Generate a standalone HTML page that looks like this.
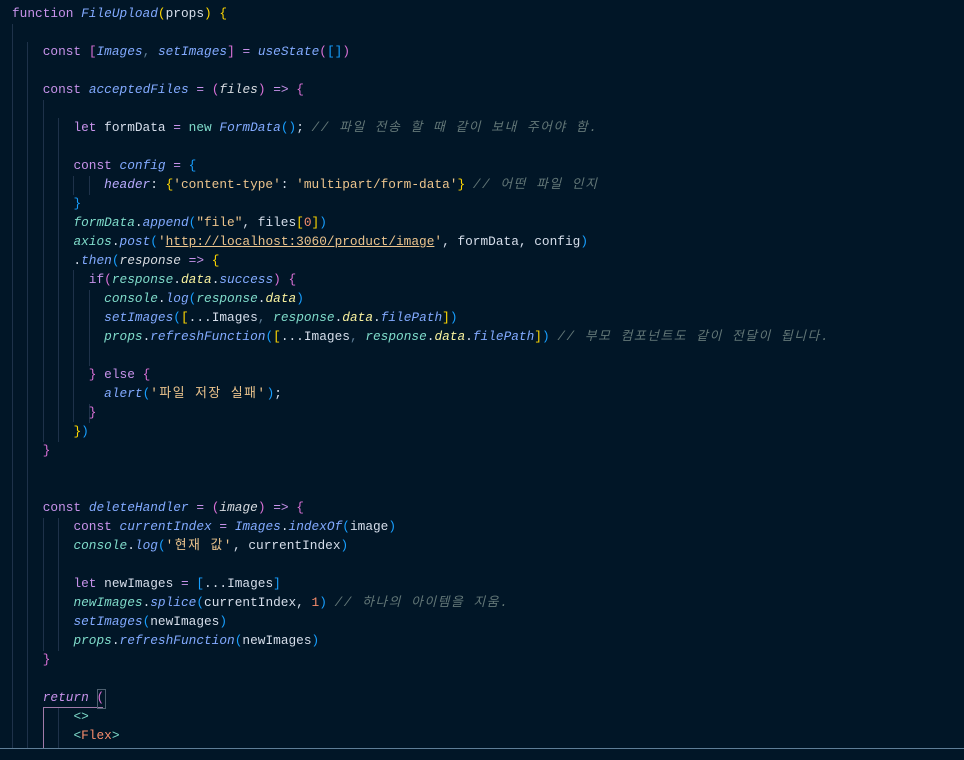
<!DOCTYPE html>
<html><head><meta charset="utf-8"><style>
body{margin:0;background:#011627;width:964px;height:760px;overflow:hidden;position:relative}
.l{position:absolute;left:12px;height:19px;line-height:19px;white-space:pre;font-family:"Liberation Mono","Noto Sans CJK KR",monospace;font-size:12.8px;color:#d6deeb}
.g{position:absolute;width:1px;background:#1e324a}
.k{color:#c792ea}.f{color:#82aaff;font-style:italic}.p{color:#d7dbe0;font-style:italic}
.s{color:#ecc48d}.c{color:#637777;font-style:italic}.y{color:#ffd700}.m{color:#da70d6}.b{color:#179fff}
.o{color:#c792ea}.pr{color:#faf39f;font-style:italic}.v{color:#7fdbca}.i{font-style:italic}.t{color:#7fdbca}.tn{color:#f78c6c}
.n{color:#f78c6c}.u{text-decoration:underline}.ob{color:#7fdbca;font-style:italic}.h{color:#baabff;font-style:italic}
.ko{letter-spacing:1.5px}.cm{color:#5f7e97}
</style></head><body>
<div class="g" style="left:12px;top:24px;height:724px"></div>
<div class="g" style="left:27px;top:42px;height:706px"></div>
<div class="g" style="left:43px;top:100px;height:342px"></div>
<div class="g" style="left:58px;top:118px;height:324px"></div>
<div class="g" style="left:73px;top:176px;height:19px"></div>
<div class="g" style="left:89px;top:176px;height:19px"></div>
<div class="g" style="left:73px;top:270px;height:152px"></div>
<div class="g" style="left:89px;top:290px;height:76px"></div>
<div class="g" style="left:89px;top:404px;height:19px"></div>
<div class="g" style="left:43px;top:518px;height:133px"></div>
<div class="g" style="left:58px;top:518px;height:133px"></div>
<div class="g" style="left:43px;top:707px;height:41px;background:#a07aa8"></div>
<div class="g" style="left:43px;top:707px;height:1px;width:60px;background:#a07aa8"></div>
<div class="g" style="left:58px;top:708px;height:40px"></div>
<div style="position:absolute;left:97px;top:689px;width:7px;height:18px;border:1px solid #4e6070"></div>

<div class="l" style="top:4px"><span class="k">function</span> <span class="f">FileUpload</span><span class="y">(</span>props<span class="y">)</span> <span class="y">{</span></div>
<div class="l" style="top:42px">    <span class="k">const</span> <span class="m">[</span><span class="f">Images</span><span class="cm">,</span> <span class="f">setImages</span><span class="m">]</span> <span class="o">=</span> <span class="f">useState</span><span class="m">(</span><span class="b">[]</span><span class="m">)</span></div>
<div class="l" style="top:80px">    <span class="k">const</span> <span class="f">acceptedFiles</span> <span class="o">=</span> <span class="m">(</span><span class="p">files</span><span class="m">)</span> <span class="o">=&gt;</span> <span class="m">{</span></div>
<div class="l" style="top:118px">        <span class="k">let</span> formData <span class="o">=</span> <span class="v">new</span> <span class="f">FormData</span><span class="b">()</span>; <span class="c ko">// 파일 전송 할 때 같이 보내 주어야 함.</span></div>
<div class="l" style="top:156px">        <span class="k">const</span> <span class="f">config</span> <span class="o">=</span> <span class="b">{</span></div>
<div class="l" style="top:175px">            <span class="h">header</span>: <span class="y">{</span><span class="s">'content-type'</span>: <span class="s">'multipart/form-data'</span><span class="y">}</span> <span class="c ko">// 어떤 파일 인지</span></div>
<div class="l" style="top:194px">        <span class="b">}</span></div>
<div class="l" style="top:213px">        <span class="ob">formData</span>.<span class="f">append</span><span class="b">(</span><span class="s">"file"</span>, files<span class="y">[</span><span class="n">0</span><span class="y">]</span><span class="b">)</span></div>
<div class="l" style="top:232px">        <span class="ob">axios</span>.<span class="f">post</span><span class="b">(</span><span class="s">'<span class="u">http://localhost:3060/product/image</span>'</span>, formData, config<span class="b">)</span></div>
<div class="l" style="top:251px">        .<span class="f">then</span><span class="b">(</span><span class="p">response</span> <span class="o">=&gt;</span> <span class="y">{</span></div>
<div class="l" style="top:270px">          <span class="k">if</span><span class="m">(</span><span class="ob">response</span>.<span class="pr">data</span>.<span class="f">success</span><span class="m">)</span> <span class="m">{</span></div>
<div class="l" style="top:289px">            <span class="ob">console</span>.<span class="f">log</span><span class="b">(</span><span class="ob">response</span>.<span class="pr">data</span><span class="b">)</span></div>
<div class="l" style="top:308px">            <span class="f">setImages</span><span class="b">(</span><span class="y">[</span>...Images<span class="cm">,</span> <span class="ob">response</span>.<span class="pr">data</span>.<span class="f">filePath</span><span class="y">]</span><span class="b">)</span></div>
<div class="l" style="top:327px">            <span class="ob">props</span>.<span class="f">refreshFunction</span><span class="b">(</span><span class="y">[</span>...Images<span class="cm">,</span> <span class="ob">response</span>.<span class="pr">data</span>.<span class="f">filePath</span><span class="y">]</span><span class="b">)</span> <span class="c ko">// 부모 컴포넌트도 같이 전달이 됩니다.</span></div>
<div class="l" style="top:365px">          <span class="m">}</span> <span class="k">else</span> <span class="m">{</span></div>
<div class="l" style="top:384px">            <span class="f">alert</span><span class="b">(</span><span class="s ko">'파일 저장 실패'</span><span class="b">)</span>;</div>
<div class="l" style="top:403px">          <span class="m">}</span></div>
<div class="l" style="top:422px">        <span class="y">}</span><span class="b">)</span></div>
<div class="l" style="top:441px">    <span class="m">}</span></div>
<div class="l" style="top:498px">    <span class="k">const</span> <span class="f">deleteHandler</span> <span class="o">=</span> <span class="m">(</span><span class="p">image</span><span class="m">)</span> <span class="o">=&gt;</span> <span class="m">{</span></div>
<div class="l" style="top:517px">        <span class="k">const</span> <span class="f">currentIndex</span> <span class="o">=</span> <span class="f">Images</span>.<span class="f">indexOf</span><span class="b">(</span>image<span class="b">)</span></div>
<div class="l" style="top:536px">        <span class="ob">console</span>.<span class="f">log</span><span class="b">(</span><span class="s ko">'현재 값'</span>, currentIndex<span class="b">)</span></div>
<div class="l" style="top:574px">        <span class="k">let</span> newImages <span class="o">=</span> <span class="b">[</span>...Images<span class="b">]</span></div>
<div class="l" style="top:593px">        <span class="ob">newImages</span>.<span class="f">splice</span><span class="b">(</span>currentIndex, <span class="n">1</span><span class="b">)</span> <span class="c ko">// 하나의 아이템을 지움.</span></div>
<div class="l" style="top:612px">        <span class="f">setImages</span><span class="b">(</span>newImages<span class="b">)</span></div>
<div class="l" style="top:631px">        <span class="ob">props</span>.<span class="f">refreshFunction</span><span class="b">(</span>newImages<span class="b">)</span></div>
<div class="l" style="top:650px">    <span class="m">}</span></div>
<div class="l" style="top:688px">    <span class="k i">return</span> <span class="m">(</span></div>
<div class="l" style="top:707px">        <span class="t">&lt;&gt;</span></div>
<div class="l" style="top:726px">        <span class="t">&lt;</span><span class="tn">Flex</span><span class="t">&gt;</span></div>
<div style="position:absolute;left:0;top:748px;width:964px;height:1px;background:#5f7e97"></div>
<div style="position:absolute;left:0;top:749px;width:964px;height:11px;background:#011627"></div>
</body></html>
